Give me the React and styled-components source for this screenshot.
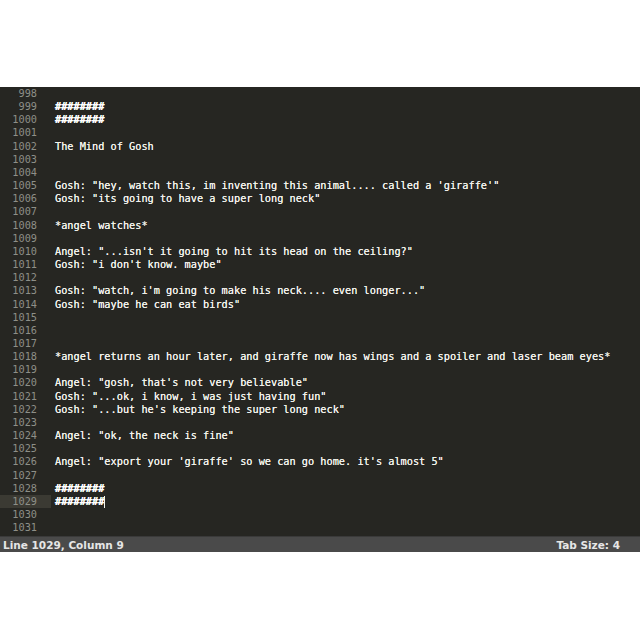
import styled, { createGlobalStyle } from "styled-components";

const GlobalStyle = createGlobalStyle`
  html, body {
    margin: 0;
    padding: 0;
    background: #ffffff;
  }
`;

const lines = [
  [998, ""],
  [999, "########"],
  [1000, "########"],
  [1001, ""],
  [1002, "The Mind of Gosh"],
  [1003, ""],
  [1004, ""],
  [1005, `Gosh: "hey, watch this, im inventing this animal.... called a 'giraffe'"`],
  [1006, `Gosh: "its going to have a super long neck"`],
  [1007, ""],
  [1008, "*angel watches*"],
  [1009, ""],
  [1010, `Angel: "...isn't it going to hit its head on the ceiling?"`],
  [1011, `Gosh: "i don't know. maybe"`],
  [1012, ""],
  [1013, `Gosh: "watch, i'm going to make his neck.... even longer..."`],
  [1014, `Gosh: "maybe he can eat birds"`],
  [1015, ""],
  [1016, ""],
  [1017, ""],
  [1018, "*angel returns an hour later, and giraffe now has wings and a spoiler and laser beam eyes*"],
  [1019, ""],
  [1020, `Angel: "gosh, that's not very believable"`],
  [1021, `Gosh: "...ok, i know, i was just having fun"`],
  [1022, `Gosh: "...but he's keeping the super long neck"`],
  [1023, ""],
  [1024, `Angel: "ok, the neck is fine"`],
  [1025, ""],
  [1026, `Angel: "export your 'giraffe' so we can go home. it's almost 5"`],
  [1027, ""],
  [1028, "########"],
  [1029, "########"],
  [1030, ""],
  [1031, ""],
];

const CURRENT = 1029;

const App = () => {
  return (
    <>
      <GlobalStyle />
      <Page>
        <Editor>
          {lines.map(([num, text]) => (
            <Row key={num}>
              <Gutter active={num === CURRENT}>{num}</Gutter>
              <Code heading={text.startsWith("#")}>
                {text}
                {num === CURRENT && <Cursor />}
              </Code>
            </Row>
          ))}
        </Editor>
        <StatusBar>
          <span>Line 1029, Column 9</span>
          <span>Tab Size: 4</span>
        </StatusBar>
      </Page>
    </>
  );
};

const Page = styled.div`
  width: 640px;
  height: 640px;
  padding-top: 87px;
  box-sizing: border-box;
  background: #ffffff;
`;

const Editor = styled.div`
  background: #262622;
  height: 449px;
  overflow: hidden;
  font-family: "DejaVu Sans Mono", "Liberation Mono", monospace;
  font-size: 10.25px;
`;

const Row = styled.div`
  display: flex;
  height: 13.17px;
  line-height: 13.17px;
  white-space: pre;
`;

const Gutter = styled.div`
  width: 37px;
  padding-right: 14px;
  text-align: right;
  color: #8e8f88;
  background: ${(p) => (p.active ? "#3b3a33" : "transparent")};
  flex-shrink: 0;
`;

const Code = styled.div`
  padding-left: 4px;
  color: ${(p) => (p.heading ? "#ffffff" : "#f2f2ec")};
  font-weight: ${(p) => (p.heading ? "bold" : "normal")};
  font-style: ${(p) => (p.heading ? "italic" : "normal")};
  text-shadow: 0 0 0.4px #f2f2ec;
`;

const Cursor = styled.span`
  display: inline-block;
  width: 1px;
  height: 12px;
  background: #f8f8f0;
  vertical-align: middle;
`;

const StatusBar = styled.div`
  height: 16px;
  background: #4a4a4a;
  border-top: 1px solid #3a3a3a;
  box-sizing: border-box;
  display: flex;
  justify-content: space-between;
  align-items: center;
  padding: 0 20px 0 3px;
  font-family: "DejaVu Sans", "Liberation Sans", sans-serif;
  font-size: 10.5px;
  font-weight: bold;
  color: #e6e6e6;
`;

export default App;
